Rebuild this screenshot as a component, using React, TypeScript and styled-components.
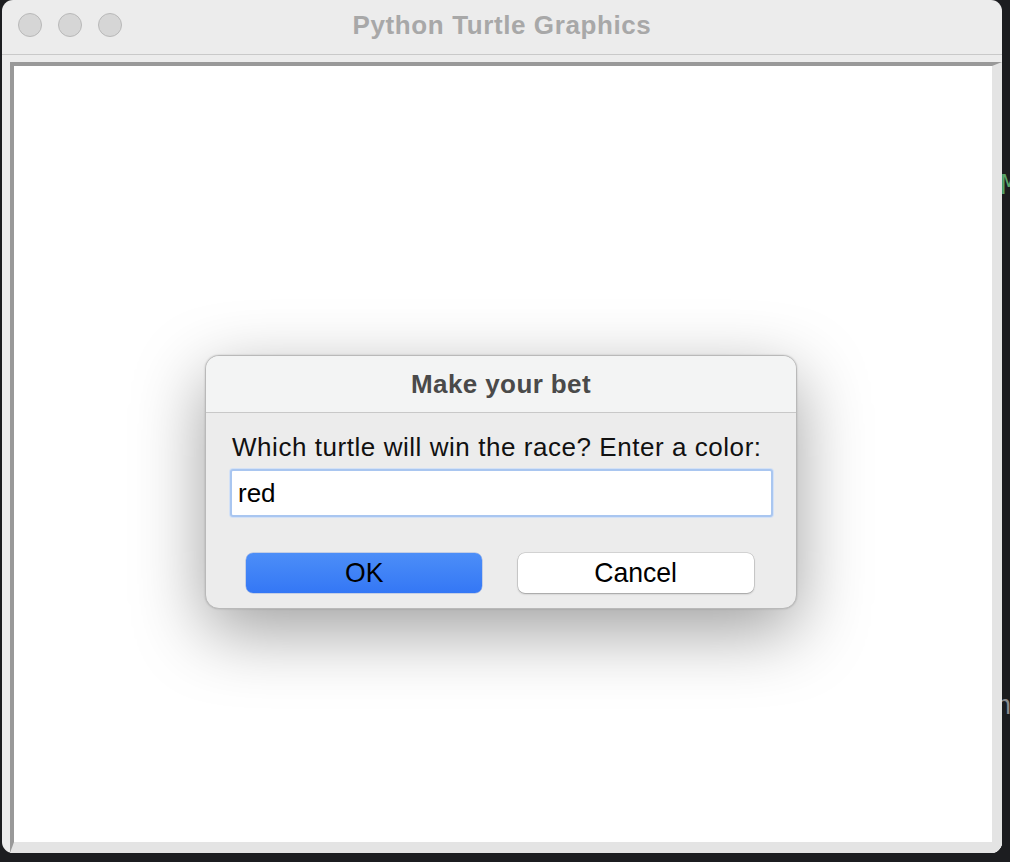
import React from "react";
import styled, { createGlobalStyle } from "styled-components";

const Global = createGlobalStyle`
  html, body { margin: 0; padding: 0; }
  body {
    background: #1c1d20;
    font-family: "Liberation Sans", Arial, sans-serif;
    width: 1010px;
    height: 862px;
    overflow: hidden;
  }
`;

const Desktop = styled.div`
  position: relative;
  width: 1010px;
  height: 862px;
  padding-left: 2px;
  box-sizing: border-box;
  background: #1c1d20;
`;

const Behind = styled.span<{ $x: number; $y: number; $c: string }>`
  position: absolute;
  left: ${(p) => p.$x}px;
  top: ${(p) => p.$y}px;
  color: ${(p) => p.$c};
  font-family: "DejaVu Sans Mono", monospace;
  font-size: 26px;
  line-height: 1;
`;

const Window = styled.div`
  position: relative;
  width: 1000px;
  height: 853px;
  background: #ececec;
  border-radius: 11px;
  display: flex;
  flex-direction: column;
  overflow: hidden;
`;

const TitleBar = styled.div`
  position: relative;
  height: 54px;
  flex: none;
  border-bottom: 1px solid #c9c9c9;
  display: flex;
  align-items: center;
  justify-content: center;
`;

const Lights = styled.div`
  position: absolute;
  left: 16px;
  top: 13px;
  display: flex;
  gap: 16px;
`;

const Light = styled.span`
  width: 22px;
  height: 22px;
  border-radius: 50%;
  background: #d6d6d6;
  border: 1px solid #b9b9b9;
`;

const Title = styled.div`
  font-weight: bold;
  font-size: 26px;
  color: #a8a8a8;
  letter-spacing: 0.6px;
  margin-top: -4px;
`;

const CanvasWrap = styled.div`
  flex: 1;
  padding: 7px 0 0 8px;
  display: flex;
`;

const Canvas = styled.div`
  flex: 1;
  background: #ffffff;
  border-top: 4px solid #999999;
  border-left: 4px solid #999999;
  border-right: 10px solid #e4e4e4;
  border-bottom: 11px solid #e4e4e4;
`;

const Dialog = styled.div`
  position: absolute;
  left: 205px;
  top: 355px;
  width: 590px;
  height: 252px;
  border: 1px solid #b9b9b9;
  border-radius: 14px;
  background: #ececec;
  box-shadow: 0 22px 70px rgba(0, 0, 0, 0.38), 0 0 2px rgba(0, 0, 0, 0.2);
  display: flex;
  flex-direction: column;
  overflow: hidden;
`;

const DialogHeader = styled.div`
  height: 56px;
  flex: none;
  background: #f3f4f4;
  border-bottom: 1px solid #c8c8c8;
  display: flex;
  align-items: center;
  justify-content: center;
  font-weight: bold;
  font-size: 26px;
  color: #4a4a4a;
  letter-spacing: 0.4px;
`;

const DialogBody = styled.div`
  padding: 20px 23px 0 24px;
  display: flex;
  flex-direction: column;
`;

const Label = styled.div`
  font-size: 26px;
  letter-spacing: 0.55px;
  color: #111;
  line-height: 28px;
  margin-bottom: 8px;
  margin-left: 2px;
  white-space: nowrap;
`;

const Input = styled.div`
  box-sizing: border-box;
  height: 48px;
  background: #fff;
  border: 2px solid #a9c6f0;
  border-radius: 3px;
  box-shadow: 0 0 0 1px #d3e1f6;
  font-size: 26px;
  color: #000;
  display: flex;
  align-items: center;
  padding-left: 6px;
`;

const Buttons = styled.div`
  display: flex;
  justify-content: space-between;
  padding: 36px 19px 0 16px;
`;

const Button = styled.div<{ $primary?: boolean }>`
  width: 236px;
  height: 40px;
  box-sizing: border-box;
  border-radius: 7px;
  display: flex;
  align-items: center;
  justify-content: center;
  font-size: 28px;
  color: #000;
  background: ${(p) =>
    p.$primary ? "linear-gradient(#4c8ef8, #3477f5)" : "#ffffff"};
  box-shadow: ${(p) =>
    p.$primary
      ? "0 0 0 0.5px rgba(40,90,200,0.4)"
      : "0 0 0 0.5px rgba(0,0,0,0.2), 0 1px 2px rgba(0,0,0,0.25)"};
`;

const BtnText = styled.span`
  display: inline-block;
  transform: scaleX(0.95);
  line-height: 1;
`;

export default function App() {
  return (
    <>
      <Global />
      <Desktop>
        <Behind $x={1001} $y={172} $c="#5aa46a">M</Behind>
        <Behind $x={996} $y={692} $c="#8a8a8e">n</Behind>
        <Window>
          <TitleBar>
            <Lights>
              <Light />
              <Light />
              <Light />
            </Lights>
            <Title>Python Turtle Graphics</Title>
          </TitleBar>
          <CanvasWrap>
            <Canvas />
          </CanvasWrap>
        </Window>
        <Dialog>
          <DialogHeader>Make your bet</DialogHeader>
          <DialogBody>
            <Label>Which turtle will win the race? Enter a color:</Label>
            <Input>red</Input>
            <Buttons>
              <Button $primary>
                <BtnText>OK</BtnText>
              </Button>
              <Button>
                <BtnText>Cancel</BtnText>
              </Button>
            </Buttons>
          </DialogBody>
        </Dialog>
      </Desktop>
    </>
  );
}
